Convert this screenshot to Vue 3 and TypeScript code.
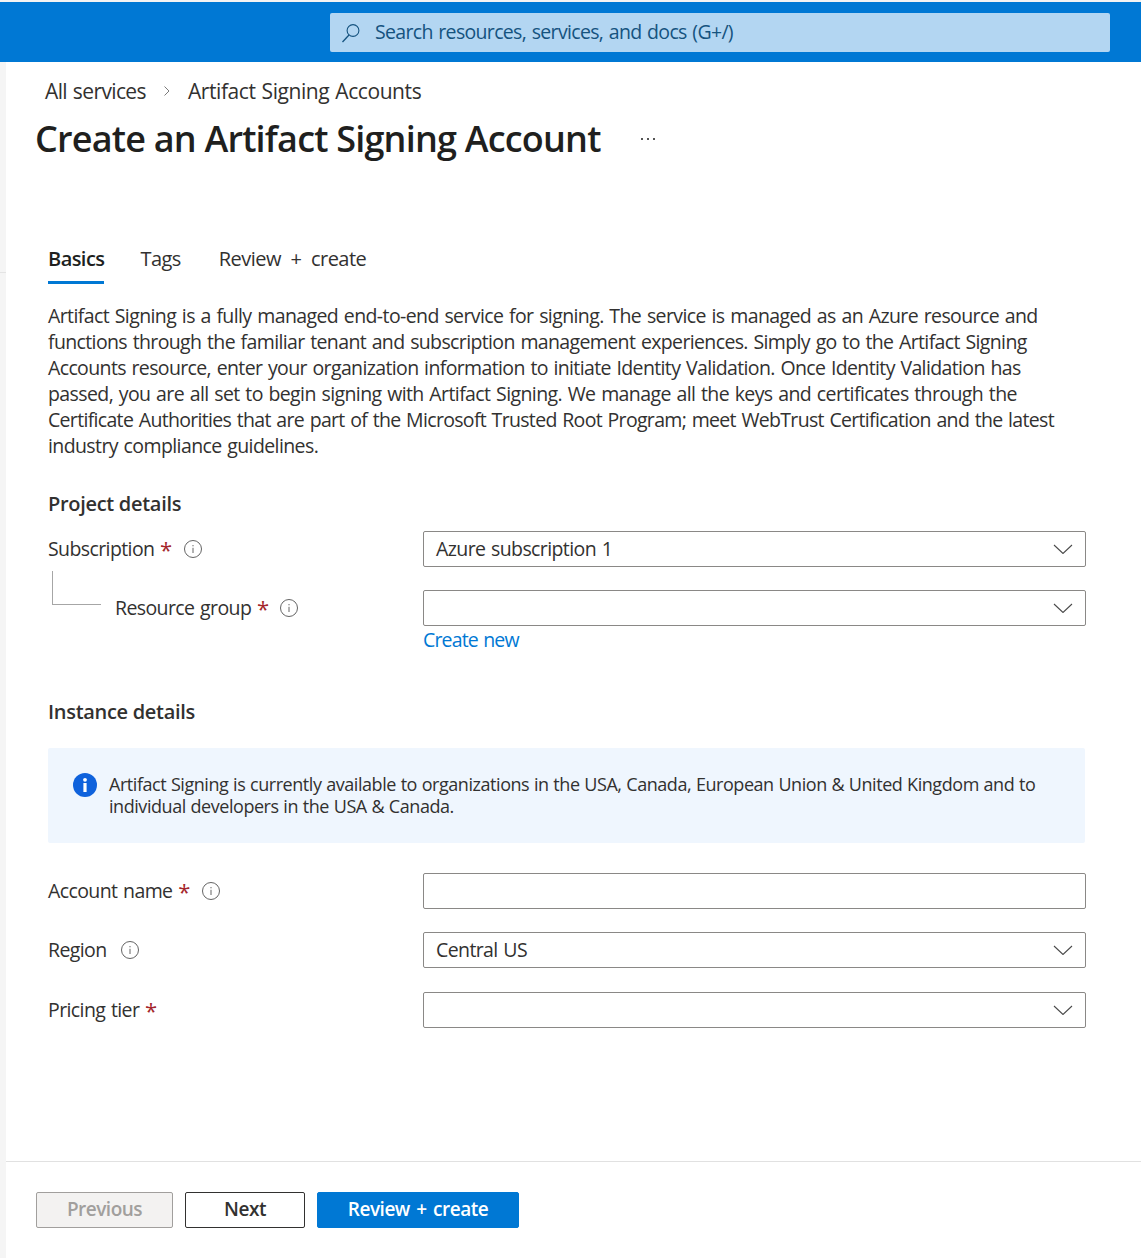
<script setup lang="ts">
const intro = [
  "Artifact Signing is a fully managed end-to-end service for signing. The service is managed as an Azure resource and",
  "functions through the familiar tenant and subscription management experiences. Simply go to the Artifact Signing",
  "Accounts resource, enter your organization information to initiate Identity Validation. Once Identity Validation has",
  "passed, you are all set to begin signing with Artifact Signing. We manage all the keys and certificates through the",
  "Certificate Authorities that are part of the Microsoft Trusted Root Program; meet WebTrust Certification and the latest",
  "industry compliance guidelines.",
];
</script>

<template>
  <div class="page">
    <header class="topbar">
      <div class="search">
        <svg class="search-icon" viewBox="0 0 20 20" width="20" height="20">
          <circle cx="12" cy="7.5" r="5.9" fill="none" stroke="#15537f" stroke-width="1.1" />
          <path d="M8 12 L1.5 19" fill="none" stroke="#15537f" stroke-width="1.3" />
        </svg>
        <span>Search resources, services, and docs (G+/)</span>
      </div>
    </header>

    <div class="body">
      <div class="rail"><div class="rail-line"></div></div>
      <main class="main">
        <nav class="crumbs">
          <span>All services</span>
          <svg viewBox="0 0 8 12" width="8" height="12">
            <path d="M1.5 1.5 L6 6 L1.5 10.5" fill="none" stroke="#7a7a7a" stroke-width="1" />
          </svg>
          <span class="crumb-last">Artifact Signing Accounts</span>
        </nav>
        <div class="title-row">
          <h1>Create an Artifact Signing Account</h1>
          <span class="more"><i></i><i></i><i></i></span>
        </div>

        <div class="content">
          <div class="tabs">
            <span class="tab active">Basics</span>
            <span class="tab">Tags</span>
            <span class="tab">Review + create</span>
          </div>

          <p class="intro">
            <span v-for="line in intro" :key="line">{{ line }}</span>
          </p>

          <h2 class="section first">Project details</h2>
          <div class="row">
            <label>Subscription <b>*</b>
              <svg class="info" viewBox="0 0 18 18" width="18" height="18">
                <circle cx="9" cy="9" r="8.5" /><path d="M9 7.8 V13 M9 5 V6.3" />
              </svg>
            </label>
            <div class="field select">
              <span>Azure subscription 1</span>
              <svg viewBox="0 0 20 10" width="20" height="10"><path d="M1 1 L10 9.5 L19 1" /></svg>
            </div>
          </div>
          <div class="row nested">
            <div class="tree"></div>
            <label>Resource group <b>*</b>
              <svg class="info" viewBox="0 0 18 18" width="18" height="18">
                <circle cx="9" cy="9" r="8.5" /><path d="M9 7.8 V13 M9 5 V6.3" />
              </svg>
            </label>
            <div class="field select">
              <span></span>
              <svg viewBox="0 0 20 10" width="20" height="10"><path d="M1 1 L10 9.5 L19 1" /></svg>
            </div>
          </div>
          <a class="create-new">Create new</a>

          <h2 class="section second">Instance details</h2>
          <div class="notice">
            <svg viewBox="0 0 24 24" width="24" height="24">
              <circle cx="12" cy="12" r="12" fill="#0f62dc" />
              <rect x="10.4" y="10" width="3.2" height="9" fill="#fff" />
              <circle cx="12" cy="6.8" r="1.9" fill="#fff" />
            </svg>
            <p>
              <span>Artifact Signing is currently available to organizations in the USA, Canada, European Union &amp; United Kingdom and to</span>
              <span>individual developers in the USA &amp; Canada.</span>
            </p>
          </div>

          <div class="row account">
            <label>Account name <b>*</b>
              <svg class="info" viewBox="0 0 18 18" width="18" height="18">
                <circle cx="9" cy="9" r="8.5" /><path d="M9 7.8 V13 M9 5 V6.3" />
              </svg>
            </label>
            <div class="field"></div>
          </div>
          <div class="row">
            <label class="plain">Region
              <svg class="info" viewBox="0 0 18 18" width="18" height="18">
                <circle cx="9" cy="9" r="8.5" /><path d="M9 7.8 V13 M9 5 V6.3" />
              </svg>
            </label>
            <div class="field select">
              <span>Central US</span>
              <svg viewBox="0 0 20 10" width="20" height="10"><path d="M1 1 L10 9.5 L19 1" /></svg>
            </div>
          </div>
          <div class="row tier">
            <label>Pricing tier <b>*</b></label>
            <div class="field select">
              <span></span>
              <svg viewBox="0 0 20 10" width="20" height="10"><path d="M1 1 L10 9.5 L19 1" /></svg>
            </div>
          </div>
        </div>

        <footer class="footer">
          <button class="btn prev" disabled>Previous</button>
          <button class="btn next">Next</button>
          <button class="btn primary">Review + create</button>
        </footer>
      </main>
    </div>
  </div>
</template>

<style>
html, body { margin: 0; background: #fff; }
</style>

<style scoped>
.page {
  width: 1141px;
  height: 1258px;
  display: flex;
  flex-direction: column;
  overflow: hidden;
  font-family: "Open Sans", "Noto Sans", sans-serif;
  font-size: 19.5px;
  letter-spacing: -0.6px;
  word-spacing: 1.2px;
  color: #323130;
  background: #f3f3f3;
}
.topbar {
  margin-top: 2px;
  height: 60px;
  flex: none;
  background: #0078d4;
  padding: 11px 31px 10px 330px;
  box-sizing: border-box;
}
.search {
  height: 39px;
  background: #b3d6f2;
  border-radius: 2px;
  display: flex;
  align-items: center;
  padding-left: 11px;
  gap: 14px;
  color: #15537f;
  letter-spacing: -0.67px;
}
.search span { position: relative; top: -1px; }
.search-icon { flex: none; }
.body { flex: 1; display: flex; min-height: 0; }
.rail { width: 6px; flex: none; background: #f5f5f5; padding-top: 210px; box-sizing: border-box; }
.rail-line { height: 1px; background: #e4e4e4; }
.main { flex: 1; background: #fff; display: flex; flex-direction: column; min-width: 0; }
.crumbs {
  height: 26px;
  margin-top: 16px;
  padding-left: 39px;
  display: flex;
  align-items: center;
  gap: 17px;
  line-height: 26px;
  font-size: 21px;
  letter-spacing: -0.62px;
  word-spacing: 1px;
}
.crumb-last { letter-spacing: -0.42px; }
.title-row {
  height: 44px;
  margin-top: 13px;
  padding-left: 29px;
  display: flex;
  align-items: center;
}
h1 {
  margin: 0;
  font-size: 36px;
  font-weight: 600;
  letter-spacing: -0.8px;
  word-spacing: 0;
  line-height: 44px;
  color: #201f1e;
}
.more { margin-left: 40px; display: flex; gap: 4px; }
.more i { width: 2px; height: 2px; background: #555; }
.content { flex: 1; padding-left: 42px; }
.tabs { margin-top: 81px; display: flex; height: 42px; font-size: 20px; letter-spacing: -0.55px; word-spacing: 5px; }
.tab { margin-right: 36px; line-height: 34px; height: 42px; box-sizing: border-box; }
.tab:nth-child(2) { margin-right: 38px; }
.tab.active { font-weight: 600; border-bottom: 3px solid #0078d4; color: #201f1e; }
.intro { margin: 19px 0 0; line-height: 26px; }
.intro span { display: block; white-space: nowrap; }
.intro span:nth-child(2), .intro span:nth-child(3) { letter-spacing: -0.63px; }
.intro span:nth-child(5) { letter-spacing: -0.68px; }
.section {
  margin: 0;
  font-size: 20px;
  font-weight: 600;
  letter-spacing: -0.3px;
  word-spacing: 0;
  line-height: 26px;
  color: #323130;
}
.section.first { margin-top: 32px; }
.section.second { margin-top: 46px; }
.row {
  position: relative;
  display: grid;
  grid-template-columns: 375px 663px;
  margin-top: 23px;
  align-items: center;
  height: 36px;
}
.section.first + .row { margin-top: 14px; }
.row.nested label { padding-left: 67px; }
.tree {
  position: absolute;
  left: 4px;
  top: -19px;
  width: 48px;
  height: 33px;
  border-left: 1px solid #a6a6a6;
  border-bottom: 1px solid #a6a6a6;
}
.row.account { margin-top: 30px; }
.row.tier { margin-top: 24px; }
label { display: flex; align-items: center; white-space: pre; line-height: 26px; }
label b { color: #a4262c; font-weight: 400; font-size: 22px; }
.info { margin-left: 12px; fill: none; stroke: #646464; stroke-width: 1; }
.plain .info { margin-left: 9px; }
.field {
  height: 36px;
  box-sizing: border-box;
  border: 1px solid #8a8886;
  border-radius: 2px;
  padding: 0 12px;
  display: flex;
  align-items: center;
  justify-content: space-between;
}
.field span { position: relative; top: -1px; }
.field svg { fill: none; stroke: #4a4a4a; stroke-width: 1.1; }
.create-new { display: block; margin: 1px 0 0 375px; line-height: 26px; color: #0078d4; letter-spacing: -0.85px; }
.notice {
  margin-top: 23px;
  width: 1037px;
  height: 95px;
  box-sizing: border-box;
  background: #eff6fe;
  border-radius: 2px;
  padding: 25px 25px;
  display: flex;
  gap: 12px;
}
.notice svg { flex: none; }
.notice p { margin: 0; font-size: 18px; line-height: 22px; letter-spacing: -0.45px; word-spacing: 0.5px; }
.notice span { display: block; white-space: nowrap; }
.footer {
  height: 97px;
  flex: none;
  box-sizing: border-box;
  border-top: 1px solid #e1e1e1;
  padding: 30px 0 0 30px;
  display: flex;
  gap: 12px;
  align-items: flex-start;
}
.btn {
  height: 36px;
  box-sizing: border-box;
  border-radius: 2px;
  font: 600 19px "Open Sans", "Noto Sans", sans-serif;
  letter-spacing: -0.5px;
  word-spacing: 2px;
  padding: 0 0 2px;
}
.prev { width: 137px; background: #f3f2f1; border: 1px solid #a19f9d; color: #a19f9d; }
.next { width: 120px; background: #fff; border: 1px solid #323130; color: #323130; }
.primary { width: 202px; background: #0078d4; border: 1px solid #0078d4; color: #fff; }
</style>
